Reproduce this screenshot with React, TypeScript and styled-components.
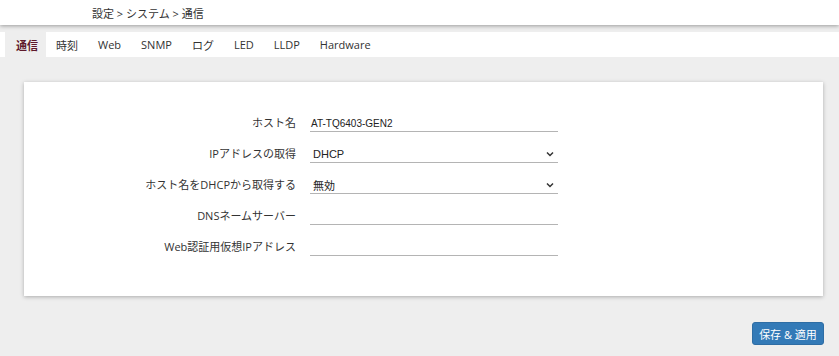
import React from 'react';
import styled, { createGlobalStyle } from 'styled-components';

// STYLES
const GlobalStyle = createGlobalStyle`
  html, body {
    margin: 0;
    padding: 0;
    background: #eeeeee;
    font-family: "Open Sans", "Noto Sans CJK JP", sans-serif;
    color: #333333;
  }
`;

const Page = styled.div`
  min-height: 356px;
  background: #eeeeee;
`;

const Header = styled.header`
  height: 25px;
  background: #ffffff;
  box-shadow: 0 1px 4px rgba(0, 0, 0, 0.35);
  position: relative;
  z-index: 1;
  display: flex;
  align-items: center;
  padding-left: 92px;
  font-size: 11px;
  color: #333333;
`;

const TabBar = styled.nav`
  margin-top: 7px;
  height: 25px;
  background: #ffffff;
  display: flex;
  padding-left: 5px;
`;

const Tab = styled.div<{ $active?: boolean }>`
  display: flex;
  align-items: center;
  padding: 0 10px;
  font-size: 11px;
  font-weight: ${p => (p.$active ? 700 : 400)};
  color: ${p => (p.$active ? '#5e1a2c' : '#333333')};
  background: ${p => (p.$active ? '#eeeeee' : 'transparent')};
  ${p => p.$active && 'padding: 0 8px 0 11px;'}
`;

const Card = styled.section`
  margin: 25px 16px 0 24px;
  background: #ffffff;
  box-shadow: 0 1px 4px rgba(0, 0, 0, 0.28);
  padding: 33px 0 40px;
`;

const Form = styled.div`
  display: grid;
  grid-template-columns: 272px 248px;
  column-gap: 14px;
  row-gap: 14px;
`;

const Label = styled.label`
  justify-self: end;
  align-self: start;
  height: 16px;
  line-height: 16px;
  font-size: 11px;
  color: #333333;
  white-space: nowrap;
`;

const Field = styled.div<{ $small?: boolean }>`
  height: 16px;
  border-bottom: 1px solid #b4b4b4;
  display: flex;
  align-items: center;
  justify-content: space-between;
  padding: 0 4px 0 1px;
  font-family: "Liberation Sans", "Noto Sans CJK JP", sans-serif;
  font-size: ${p => (p.$small ? '10px' : '11px')};
  color: #222222;
`;

const SelectValue = styled.span<{ $cjk?: boolean }>`
  padding-left: 2px;
  font-family: ${p =>
    p.$cjk ? '"Noto Sans CJK JP", sans-serif' : '"Liberation Sans", sans-serif'};
`;

const Footer = styled.div`
  display: flex;
  justify-content: flex-end;
  padding: 26px 15px 0 0;
`;

const Button = styled.button`
  width: 72px;
  height: 23px;
  background: #337ab7;
  border: 1px solid #2e6da4;
  border-radius: 3px;
  color: #ffffff;
  font-family: "Open Sans", "Noto Sans CJK JP", sans-serif;
  font-size: 11px;
  padding: 0;
`;

// COMPONENT
const Chevron: React.FC = () => (
  <svg width="8" height="6" viewBox="0 0 8 6">
    <path d="M1 1.5 L4 4.5 L7 1.5" fill="none" stroke="#333" strokeWidth="1.5" />
  </svg>
);

const tabs = ['通信', '時刻', 'Web', 'SNMP', 'ログ', 'LED', 'LLDP', 'Hardware'];

const App: React.FC = () => (
  <Page>
    <GlobalStyle />
    <Header>設定 &gt; システム &gt; 通信</Header>
    <TabBar>
      {tabs.map((t, i) => (
        <Tab key={t} $active={i === 0}>
          {t}
        </Tab>
      ))}
    </TabBar>
    <Card>
      <Form>
        <Label>ホスト名</Label>
        <Field $small>AT-TQ6403-GEN2</Field>

        <Label>IPアドレスの取得</Label>
        <Field>
          <SelectValue>DHCP</SelectValue>
          <Chevron />
        </Field>

        <Label>ホスト名をDHCPから取得する</Label>
        <Field>
          <SelectValue $cjk>無効</SelectValue>
          <Chevron />
        </Field>

        <Label>DNSネームサーバー</Label>
        <Field />

        <Label>Web認証用仮想IPアドレス</Label>
        <Field />
      </Form>
    </Card>
    <Footer>
      <Button>保存 &amp; 適用</Button>
    </Footer>
  </Page>
);

export default App;
